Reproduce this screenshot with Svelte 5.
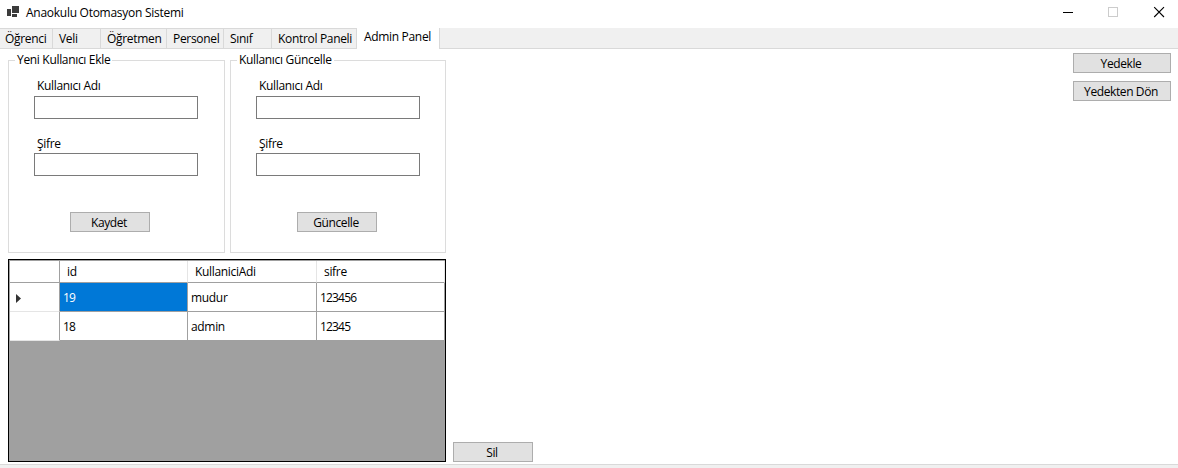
<script>
  const tabs = [
    { name: 'Öğrenci', width: 53, pad: 5 },
    { name: 'Veli', width: 48, pad: 6 },
    { name: 'Öğretmen', width: 66, pad: 6 },
    { name: 'Personel', width: 57, pad: 6 },
    { name: 'Sınıf', width: 48, pad: 6 },
    { name: 'Kontrol Paneli', width: 85, pad: 6 },
    { name: 'Admin Panel', width: 83, pad: 7, active: true }
  ];
  const groups = [
    { title: 'Yeni Kullanıcı Ekle', action: 'Kaydet', kind: 'add' },
    { title: 'Kullanıcı Güncelle', action: 'Güncelle', kind: 'update' }
  ];
  const users = [
    { id: 19, name: 'mudur', pass: '123456' },
    { id: 18, name: 'admin', pass: '12345' }
  ];
</script>

<div class="window">
  <header>
    <svg class="logo" width="14" height="12" viewBox="0 0 14 12" shape-rendering="crispEdges" fill="#3c3c3c">
      <rect x="5" width="7" height="7" /><rect y="3" width="4" height="7" /><rect x="5" y="8" width="5" height="3" />
    </svg>
    <span class="title">Anaokulu Otomasyon Sistemi</span>
    <svg class="controls" width="102" height="12" viewBox="0 0 102 12" fill="none">
      <path d="M0 6.5H10" stroke="#000" />
      <rect x="45.5" y="1.5" width="9" height="9" stroke="#ccc" />
      <path d="M91.2 1.2L101 11M101 1.2L91.2 11" stroke="#000" stroke-width="1.1" />
    </svg>
  </header>

  <nav>
    {#each tabs as tab}
      <div class="tab" class:active={tab.active} style="width:{tab.width}px;padding-left:{tab.pad}px">{tab.name}</div>
    {/each}
  </nav>

  <main>
    <div class="left">
      <div class="groups">
        {#each groups as group}
          <section class="group {group.kind}">
            <h2><span>{group.title}</span></h2>
            <div class="field"><label for="{group.kind}-name">Kullanıcı Adı</label><input id="{group.kind}-name" /></div>
            <div class="field"><label for="{group.kind}-pass">Şifre</label><input id="{group.kind}-pass" /></div>
            <button>{group.action}</button>
          </section>
        {/each}
      </div>
      <div class="grid">
        <div class="row head"><div class="mark"></div><div>id</div><div>KullaniciAdi</div><div>sifre</div></div>
        {#each users as user, i}
          <div class="row">
            <div class="mark">
              {#if i === 0}<svg width="5" height="9" viewBox="0 0 5 9"><path d="M0 0L5 4.5L0 9Z" fill="#333" /></svg>{/if}
            </div>
            <div class="num" class:selected={i === 0}>{user.id}</div><div>{user.name}</div><div class="num">{user.pass}</div>
          </div>
        {/each}
      </div>
    </div>
    <button class="delete">Sil</button>
    <aside><button>Yedekle</button><button>Yedekten Dön</button></aside>
  </main>
  <footer></footer>
</div>

<style>
  * { box-sizing: border-box; }
  .window { width: 1178px; height: 468px; display: flex; flex-direction: column; overflow: hidden; background: #fff; color: #000; font: 12px/16px "Open Sans", "Noto Sans", sans-serif; letter-spacing: -0.32px; white-space: nowrap; }
  header { height: 28px; flex: none; display: flex; padding: 6px 13px 0 7px; }
  .title { margin: -1px 0 0 5px; letter-spacing: -0.27px; }
  .controls { margin-left: auto; }
  nav { height: 21px; flex: none; display: flex; background: linear-gradient(#d9d9d9, #d9d9d9) 0 20px / 100% 1px no-repeat #f0f0f0; }
  .tab { height: 21px; border: 1px solid #d9d9d9; border-left: 0; padding-top: 2px; }
  .active { background: #fff; border-top: 0; border-bottom: 0; padding-top: 1px; }
  main { height: 415px; flex: none; display: flex; padding: 4px 7px 2px 8px; }
  .left { width: 438px; margin-right: 7px; display: flex; flex-direction: column; }
  .groups { display: flex; gap: 5px; margin: 7px 0 6px; }
  .group { width: 217px; height: 193px; border: 1px solid #dcdcdc; padding-left: 25px; }
  .update { width: 216px; }
  h2 { font: inherit; height: 16px; margin: -9px 0 10px -19px; }
  h2 span { display: inline-block; height: 16px; background: #fff; padding: 0 2px; }
  .field { height: 57px; display: flex; flex-direction: column; }
  label { height: 18px; margin-left: 3px; }
  .field + .field label { height: 17px; }
  .field + .field { margin-top: 1px; height: 56px; }
  input { width: 164px; height: 23px; border: 1px solid #7a7a7a; background: #fff; padding: 0 3px; font: inherit; outline: 0; }
  button { width: 80px; height: 20px; border: 1px solid #adadad; border-radius: 0; background: #e1e1e1; color: #000; padding: 2px 2px 0 0; font: inherit; letter-spacing: -0.4px; text-align: center; }
  .group button { display: block; margin: 20px 0 0 36px; }
  .update button { margin-left: 41px; }
  .grid { width: 438px; height: 203px; border: 1px solid #000; background: #a0a0a0; padding: 1px 0 0 1px; }
  .row { display: grid; grid-template-columns: 50px 128px 129px 128px; height: 29px; width: 435px; background: #fff; }
  .row > div { border-right: 1px solid #a0a0a0; border-bottom: 1px solid #a0a0a0; padding: 7px 0 0 3px; }
  .row > .num { letter-spacing: -0.82px; }
  .row.head { height: 22px; }
  .row.head > div { padding: 3px 0 0 7px; border-right-color: #e5e5e5; }
  .row.head > .mark { border-right-color: #a0a0a0; }
  .row > .mark { padding: 11px 0 0 6px; line-height: 0; }
  .row:not(.head) > .mark { border-bottom-color: #e5e5e5; }
  .row > .selected { background: #0078d7; color: #fff; }
  .delete { align-self: flex-end; }
  aside { margin-left: auto; display: flex; flex-direction: column; gap: 8px; }
  aside button { width: 98px; }
  footer { height: 4px; flex: none; border-top: 1px solid #d9d9d9; background: #f0f0f0; }
</style>
